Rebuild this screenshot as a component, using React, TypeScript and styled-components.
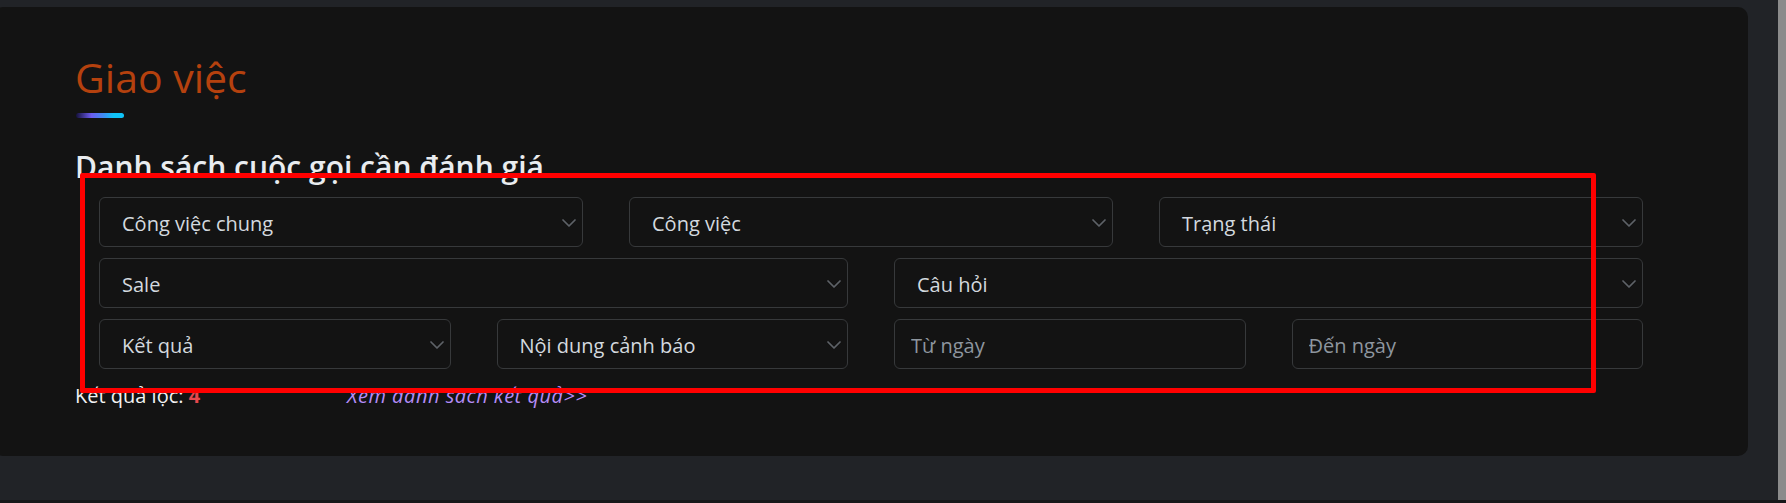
import React from "react";
import styled, { createGlobalStyle, css } from "styled-components";

const Global = createGlobalStyle`
  html, body { margin: 0; padding: 0; background: #212327; overflow: hidden; }
  body { font-family: "Open Sans", "Noto Sans", sans-serif; }
  *, *::before, *::after { box-sizing: border-box; }
`;

const Page = styled.div`
  display: flex;
  flex-direction: column;
  width: 1786px;
  height: 503px;
  background: #212327;
`;

const Viewport = styled.div`
  display: flex;
  flex: 1;
  min-height: 0;
`;

const Main = styled.main`
  position: relative;
  flex: 1;
  padding-top: 7px;
`;

const ScrollTrack = styled.div`
  width: 8px;
  background: #8b8b8b;
`;

const BottomEdge = styled.div`
  height: 3px;
  background: #17181a;
`;

const Card = styled.section`
  margin: 0 30px 0 -7px;
  background: #131313;
  border-radius: 10px;
  padding: 46px 100px 45px 82px;
`;

const Title = styled.h1`
  margin: 0;
  font-size: 41px;
  line-height: 48px;
  font-weight: 400;
  color: #b5410e;
`;

const Accent = styled.div`
  width: 48px;
  height: 5px;
  margin: 12px 0 0 1px;
  border-radius: 3px;
  background: linear-gradient(90deg, #15113a 0%, #6c5cf0 32%, #3d8ef4 58%, #0fc3f7 78%, #0fc3f7 100%);
`;

const Subtitle = styled.h2`
  margin: 30px 0 0;
  font-size: 30px;
  line-height: 37px;
  font-weight: 600;
  letter-spacing: 0;
  color: #e9ecef;
`;

const Filters = styled.div`
  display: flex;
  flex-direction: column;
  gap: 11px;
  width: 1544px;
  margin: 12px 0 0 24px;
`;

const FilterRow = styled.div<{ $cols: number }>`
  display: grid;
  grid-template-columns: repeat(${(p) => p.$cols}, 1fr);
  column-gap: 46px;
`;

const fieldBase = css`
  height: 50px;
  border: 1px solid #37393b;
  border-radius: 6px;
  background: #131313;
  font-family: "Open Sans", "Noto Sans", sans-serif;
  font-size: 20px;
`;

const SelectBox = styled.div`
  ${fieldBase};
  display: flex;
  align-items: center;
  justify-content: space-between;
  padding: 2px 6px 0 22px;
  color: #d3d9df;
`;

const DateInput = styled.input`
  ${fieldBase};
  width: 100%;
  padding: 2px 16px 0;
  color: #d3d9df;
  outline: none;
  &::placeholder {
    color: #8e969f;
  }
`;

const ResultLine = styled.div`
  display: flex;
  margin-top: 12px;
  font-size: 20px;
  line-height: 30px;
`;

const Count = styled.div`
  width: 272px;
  color: #f2f2f2;
`;

const CountValue = styled.b`
  color: #e5484d;
  font-weight: 700;
`;

const ResultLink = styled.a`
  color: #b38cf7;
  font-style: italic;
  letter-spacing: 0.5px;
  text-decoration: none;
`;

const Annotation = styled.div`
  position: absolute;
  left: 80px;
  top: 173px;
  width: 1516px;
  height: 220px;
  border: 5px solid #ff0000;
  border-radius: 2px;
  pointer-events: none;
`;

const Chevron = () => (
  <svg width="14" height="8" viewBox="0 0 14 8" fill="none">
    <path d="M1 1l6 6 6-6" stroke="#5e6268" strokeWidth="1.7" strokeLinecap="round" strokeLinejoin="round" />
  </svg>
);

const Select = ({ label }: { label: string }) => (
  <SelectBox>
    <span>{label}</span>
    <Chevron />
  </SelectBox>
);

export default function App() {
  return (
    <>
      <Global />
      <Page>
        <Viewport>
          <Main>
            <Card>
              <Title>Giao việc</Title>
              <Accent />
              <Subtitle>Danh sách cuộc gọi cần đánh giá</Subtitle>
              <Filters>
                <FilterRow $cols={3}>
                  <Select label="Công việc chung" />
                  <Select label="Công việc" />
                  <Select label="Trạng thái" />
                </FilterRow>
                <FilterRow $cols={2}>
                  <Select label="Sale" />
                  <Select label="Câu hỏi" />
                </FilterRow>
                <FilterRow $cols={4}>
                  <Select label="Kết quả" />
                  <Select label="Nội dung cảnh báo" />
                  <DateInput placeholder="Từ ngày" />
                  <DateInput placeholder="Đến ngày" />
                </FilterRow>
              </Filters>
              <ResultLine>
                <Count>
                  Kết quả lọc: <CountValue>4</CountValue>
                </Count>
                <ResultLink href="#">Xem danh sách kết quả&gt;&gt;</ResultLink>
              </ResultLine>
            </Card>
            <Annotation />
          </Main>
          <ScrollTrack />
        </Viewport>
        <BottomEdge />
      </Page>
    </>
  );
}
